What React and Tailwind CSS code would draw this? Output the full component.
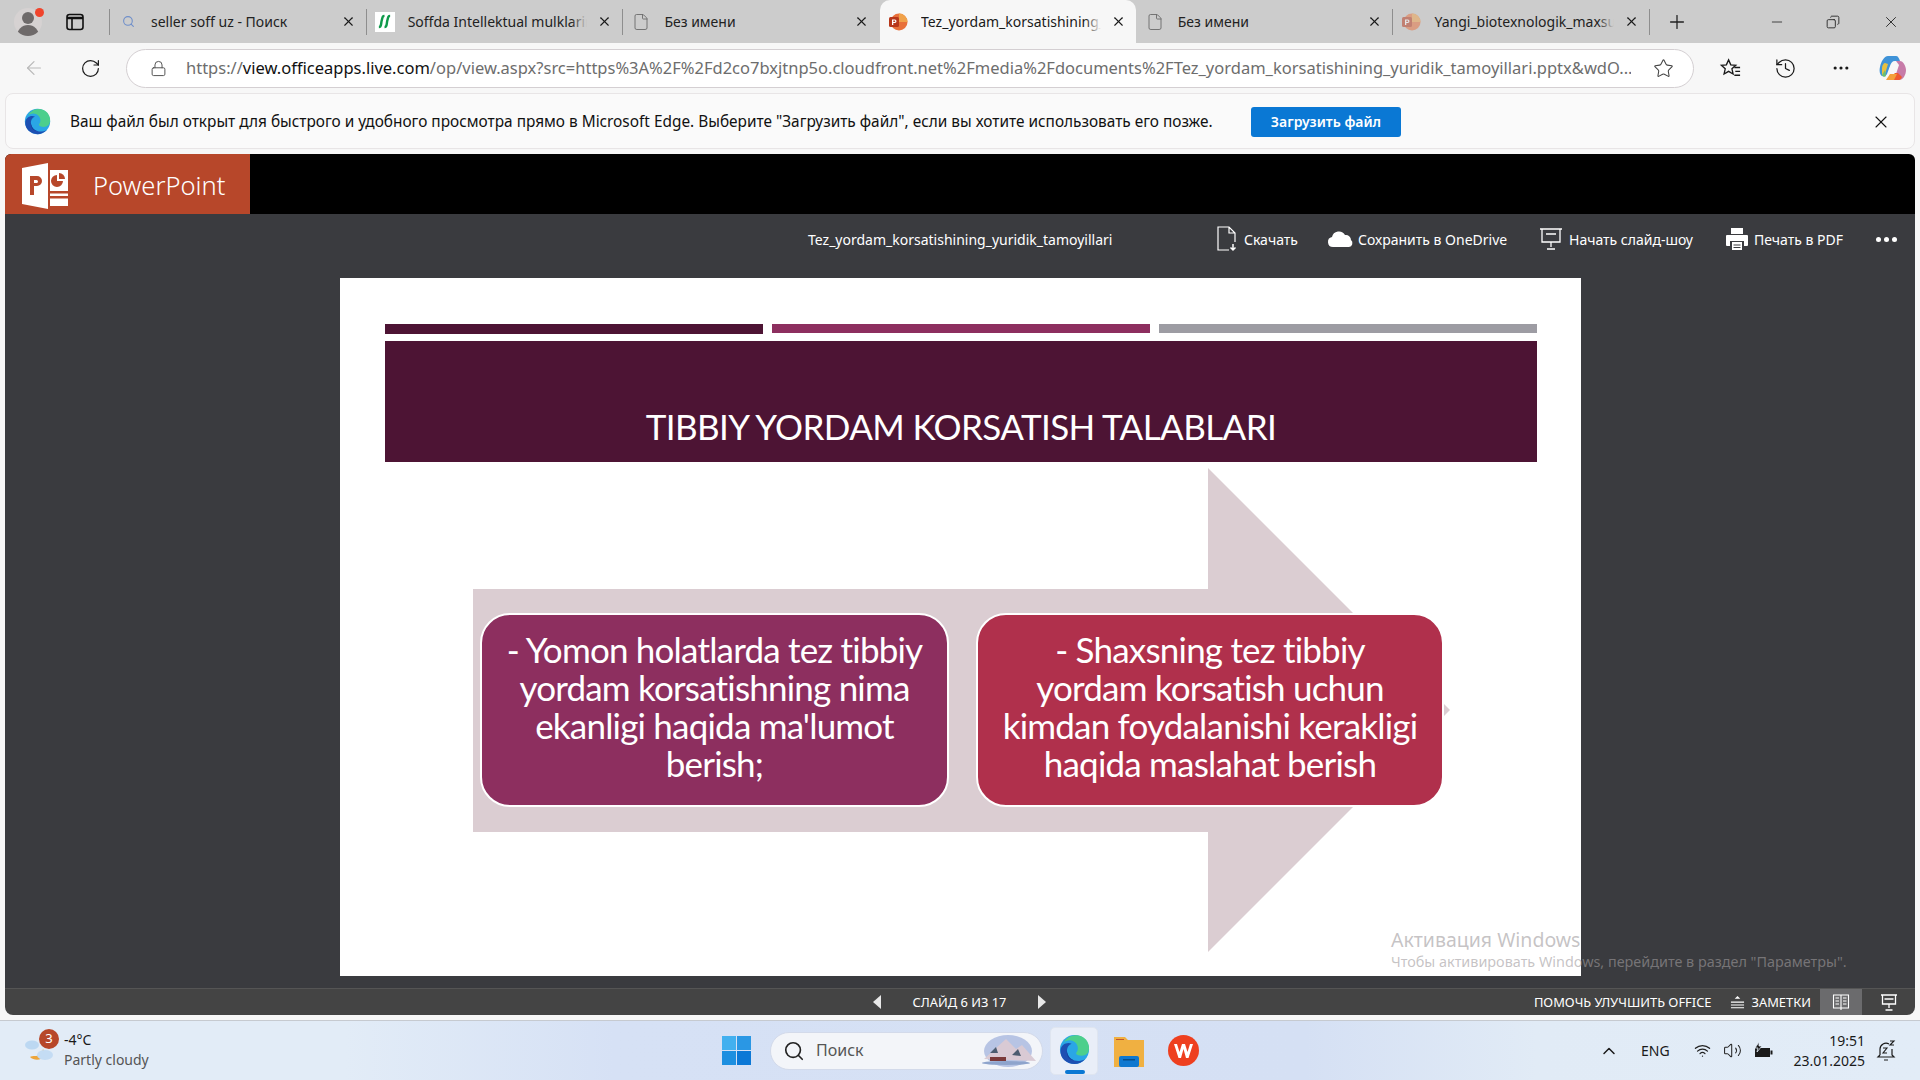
import { ArrowLeft, RotateCw, Lock, Star, History, MoreHorizontal, X, Plus, Minus, Copy, Search, File, ChevronUp, Wifi, Volume2 } from 'lucide-react';

const EdgeLogo = ({ className }) => (
  <svg viewBox="0 0 32 32" className={className}>
    <circle cx="16" cy="16" r="15" fill="#2aa6e6" />
    <path d="M9 4C14 0 23 0 28 6c3 4 4 9 2 13-2 3-6 4-10 3-2-1-3-2-2-3 2-2 2-6 0-9C15 6 9 5 5 9c1-2 2-4 4-5z" fill="#4ccf8c" />
    <path d="M1.5 17C2 11 8 8 13 10c-4 1-6 6-4 11 2 6 10 9 18 5-3 3-7 5-11 5C8 31 1 25 1.500 17z" fill="#1d4fb2" />
    <path d="M13 10c-4 1-6 6-4 11 1 3 3 5 6 6-4 0-7-4-7-9 0-4 2-7 5-8z" fill="#0f3f9a" />
  </svg>
);

const PptFavicon = ({ faded }) => (
  <svg viewBox="0 0 20 20" className={`w-[20px] h-[20px] ${faded ? 'opacity-50' : ''}`}>
    <circle cx="11" cy="10" r="8.500" fill="#e8703a" />
    <path d="M11 1.500a8.500 8.500 0 0 1 8.500 8.500H11z" fill="#f0a24a" />
    <rect x="1" y="5" width="10" height="10" rx="1.500" fill="#b7371a" />
    <path d="M4 7.500h2.800a1.700 1.700 0 0 1 0 3.400H5.300V13H4zM5.300 8.600v1.300h1.300a.65.65 0 0 0 0-1.300z" fill="#fff" />
  </svg>
);

const Tab = ({ icon, title, active, hideSep }) => (
  <>
    <div className={`w-px h-[26px] shrink-0 ${hideSep ? 'bg-transparent' : 'bg-[#8e8e8e]'}`} />
    <div className={`w-[255.700px] h-full shrink-0 flex items-center pl-[8px] pr-[10px] ${active ? 'bg-[#f7f7f7] rounded-t-[10px] text-[#1a1a1a]' : 'text-[#222]'}`}>
      <div className="w-[20px] h-[20px] flex items-center justify-center shrink-0">{icon}</div>
      <div className="relative flex-1 ml-[13px] pb-[1px] overflow-hidden whitespace-nowrap text-[14px]">
        {title}
        <div className={`absolute right-0 top-0 bottom-0 w-[16px] bg-gradient-to-r from-transparent ${active ? 'to-[#f7f7f7]' : 'to-[#cccccc]'}`} />
      </div>
      <X size={15} strokeWidth={1.8} className="ml-[10px] shrink-0 text-[#1a1a1a]" />
    </div>
  </>
);

const TabBar = () => (
  <div className="h-[43px] bg-[#cccccc] flex items-center shrink-0">
    <div className="w-[109px] h-full flex items-center shrink-0">
      <div className="relative ml-[14px] w-[28px] h-[28px] rounded-full bg-[#d6d2d2] overflow-hidden">
        <div className="mx-auto mt-[4px] w-[12px] h-[12px] rounded-full bg-[#6e6a6a]" />
        <div className="mx-auto mt-[1px] w-[22px] h-[14px] rounded-t-full bg-[#6e6a6a]" />
      </div>
      <div className="absolute left-[35px] top-[8px] w-[9px] h-[9px] rounded-full bg-[#f0442c]" />
      <svg viewBox="0 0 18 18" className="ml-[24px] w-[18px] h-[18px]" fill="none" stroke="#111" strokeWidth="1.600">
        <rect x="1" y="1.500" width="16" height="15" rx="2.500" />
        <path d="M1 5h16" strokeWidth="2.500" />
        <path d="M6 5v11" />
      </svg>
    </div>
    <Tab title="seller soff uz - Поиск" icon={<Search size={13} strokeWidth={2} className="text-[#6f8fca]" />} />
    <Tab
      title="Soffda Intellektual mulklarini"
      icon={
        <div className="w-[20px] h-[20px] bg-white flex items-center justify-center">
          <svg viewBox="0 0 16 16" className="w-[15px] h-[15px]" fill="none" stroke="#0f9a4a" strokeWidth="2.600">
            <path d="M2 14c3 0 2-3 3-7s1-5 3-5M8 14c3 0 2-3 3-7s1-5 3-5" />
          </svg>
        </div>
      }
    />
    <Tab title="Без имени" icon={<File size={18} strokeWidth={1.2} className="text-[#6a6a6a]" />} />
    <Tab active hideSep title="Tez_yordam_korsatishining_yuridik" icon={<PptFavicon />} />
    <Tab hideSep title="Без имени" icon={<File size={18} strokeWidth={1.2} className="text-[#6a6a6a]" />} />
    <Tab title="Yangi_biotexnologik_maxsus" icon={<PptFavicon faded />} />
    <div className="w-px h-[26px] shrink-0 bg-[#8e8e8e]" />
    <Plus size={22} strokeWidth={1.4} className="ml-[16px] text-[#222]" />
    <div className="flex-1" />
    <Minus size={16} strokeWidth={1.2} className="mr-[41px] text-[#222]" />
    <Copy size={14} strokeWidth={1.5} className="mr-[42px] text-[#222] -scale-x-100" />
    <X size={18} strokeWidth={1.2} className="mr-[20px] text-[#222]" />
  </div>
);

const CopilotLogo = () => (
  <svg viewBox="0 0 28 28" className="w-[28px] h-[28px] ml-[11px] shrink-0">
    <path d="M9 2h8c2 0 3 2 4 5l-5 0c-3 0-4 2-5 5l-3 8c-1 2-3 3-5 2-2-1-3-5-2-9 1-5 4-11 8-11z" fill="#3f93d8" />
    <path d="M3 14c0-3 2-5 3-5l3 1-3 10c-1 2-2 2-3 1z" fill="#e8c040" />
    <path d="M6 16l-3 5c1 2 3 2 4 1z" fill="#6cc070" />
    <path d="M17 7h4c3 0 6 5 6 9 0 5-3 10-7 10l-3-6 3-9z" fill="#c77ba8" />
    <path d="M12 26h8c1 0 2-1 3-3l-4-4h-3l-2 2z" fill="#ef5a30" />
    <path d="M7 26h8l3-6h-7z" fill="#f4a03a" />
    <path d="M11 13c1-2 2-3 4-3h3l-2 6c-1 2-2 4-4 4H9z" fill="#f7f7f7" />
  </svg>
);

const AddressBar = () => (
  <div className="h-[50px] flex items-center pl-[6px] shrink-0">
    <div className="w-[56px] flex justify-center"><ArrowLeft size={22} strokeWidth={1.3} className="text-[#b9b9b9]" /></div>
    <div className="w-[56px] flex justify-center"><RotateCw size={21} strokeWidth={1.4} className="text-[#1c1c1c]" /></div>
    <div className="ml-[8px] w-[1568px] h-[39px] rounded-full bg-white border border-[#d4cfd2] flex items-center pl-[23px] pr-[19px]">
      <Lock size={17} strokeWidth={1.4} className="text-[#555] shrink-0" />
      <div className="ml-[19px] flex-1 text-[16.500px] whitespace-nowrap overflow-hidden text-[#6d6d6d]">
        https://<span className="text-[#111]">view.officeapps.live.com</span>/op/view.aspx?src=https%3A%2F%2Fd2co7bxjtnp5o.cloudfront.net%2Fmedia%2Fdocuments%2FTez_yordam_korsatishining_yuridik_tamoyillari.pptx&wdO...
      </div>
      <Star size={21} strokeWidth={1.2} className="ml-[22px] text-[#444] shrink-0" />
    </div>
    <div className="ml-[8px] w-[56px] flex justify-center">
      <svg viewBox="0 0 24 24" className="w-[23px] h-[23px]" fill="none" stroke="#1a1a1a" strokeWidth="1.400">
        <path d="M10 3l2.300 5.200 5.200.4-4 3.700 1.200 5.400L10 15l-4.700 2.700 1.200-5.400-4-3.700 5.200-.4z" />
        <path d="M16 11h6M17 15h5M16 19h6" />
      </svg>
    </div>
    <div className="w-[55px] flex justify-center"><History size={23} strokeWidth={1.3} className="text-[#1a1a1a]" /></div>
    <div className="w-[55px] flex justify-center"><MoreHorizontal size={20} strokeWidth={1.8} className="text-[#1a1a1a]" /></div>
    <CopilotLogo />
  </div>
);

const InfoBar = () => (
  <div className="mx-[5px] h-[56px] pt-[1px] shrink-0 rounded-lg border border-[#e8e5e6] bg-[#fafafa] flex items-center text-[15.400px] text-[#111]">
    <EdgeLogo className="ml-[18px] w-[27px] h-[27px] shrink-0" />
    <div className="ml-[19px] w-[1181px] whitespace-nowrap shrink-0">
      Ваш файл был открыт для быстрого и удобного просмотра прямо в Microsoft Edge. Выберите "Загрузить файл", если вы хотите использовать его позже.
    </div>
    <div className="w-[150px] h-[30px] rounded-[3px] bg-[#0a78d4] text-white font-semibold text-[14px] flex items-center justify-center shrink-0">
      Загрузить файл
    </div>
    <div className="flex-1" />
    <X size={20} strokeWidth={1.3} className="mr-[23px] text-[#111]" />
  </div>
);

const PptLogo = () => (
  <svg viewBox="0 0 46 46" className="w-[46px] h-[46px] ml-[17px] shrink-0">
    <path d="M0 5L26 0v46L0 41z" fill="#fff" />
    <path d="M8 13h7a5 5 0 0 1 0 10h-3v9H8zM12 17v3h2.500a1.500 1.500 0 0 0 0-3z" fill="#b7472a" />
    <path d="M28 7h18v36H28z" fill="#fff" />
    <path d="M35 12a6 6 0 1 0 6 6h-6z" fill="#b7472a" />
    <path d="M37 10a6 6 0 0 1 6 6h-6z" fill="#b7472a" />
    <path d="M28 28h18v2.500H28zM28 33h18v2.500H28z" fill="#b7472a" />
  </svg>
);

const Toolbar = () => (
  <div className="w-full h-[50px] flex items-center text-white text-[14px] shrink-0">
    <div className="ml-[803px] w-[408px] whitespace-nowrap">Tez_yordam_korsatishining_yuridik_tamoyillari</div>
    <div className="w-[111px] flex items-center">
      <div className="w-[28px]">
        <svg viewBox="0 0 22 26" className="w-[22px] h-[26px]" fill="none" stroke="#fff" strokeWidth="1.200">
          <path d="M13 24H2V1h11l6 6v9M13 1v6h6" />
          <path d="M17 18v6m-2.500-2.500L17 24l2.500-2.500" strokeWidth="1.500" />
        </svg>
      </div>
      <span className="whitespace-nowrap">Скачать</span>
    </div>
    <div className="w-[212px] flex items-center">
      <div className="w-[31px]">
        <svg viewBox="0 0 26 18" className="w-[26px] h-[18px]" fill="#fff">
          <path d="M6 17a5 5 0 0 1-1-9.900 7 7 0 0 1 13-2 5 5 0 0 1 6 5 4 4 0 0 1-2 7z" />
        </svg>
      </div>
      <span className="whitespace-nowrap">Сохранить в OneDrive</span>
    </div>
    <div className="w-[186px] flex items-center">
      <div className="w-[30px]">
        <svg viewBox="0 0 24 24" className="w-[24px] h-[24px]" fill="none" stroke="#fff" strokeWidth="1.300">
          <path d="M1 2h22M3 2v13h18V2M12 15v5M8 22h8M7 7h10" />
        </svg>
      </div>
      <span className="whitespace-nowrap">Начать слайд-шоу</span>
    </div>
    <div className="w-[151px] flex items-center">
      <div className="w-[29px]">
        <svg viewBox="0 0 24 24" className="w-[24px] h-[24px]" fill="#fff">
          <path d="M6 1h12v6H6zM2 8h20a1 1 0 0 1 1 1v9a1 1 0 0 1-1 1h-3v-5H5v5H2a1 1 0 0 1-1-1V9a1 1 0 0 1 1-1z" />
          <path d="M7 15h10v8H7z" />
          <path d="M8.500 17.500h7v1h-7zM8.500 20h7v1h-7z" fill="#3a3b3f" />
        </svg>
      </div>
      <span className="whitespace-nowrap">Печать в PDF</span>
    </div>
    <div className="flex gap-[3px]">
      <div className="w-[5px] h-[5px] rounded-full bg-white" />
      <div className="w-[5px] h-[5px] rounded-full bg-white" />
      <div className="w-[5px] h-[5px] rounded-full bg-white" />
    </div>
  </div>
);

const Slide = () => (
  <div className="w-[1241px] h-[698px] bg-white shrink-0 pt-[46px] pl-[45px] pr-[44px] font-['Lato',sans-serif] text-white">
    <div className="flex gap-[9px] h-[10px]">
      <div className="w-[378px] h-[10px] bg-[#4d1434]" />
      <div className="w-[378px] h-[9px] bg-[#8d2f5f]" />
      <div className="w-[378px] h-[9px] bg-[#9d9ca3]" />
    </div>
    <div className="mt-[7px] h-[121px] bg-[#4d1434] flex items-end justify-center pb-[12px]">
      <div className="text-[35px] leading-[48px] tracking-[-0.600px] whitespace-nowrap">TIBBIY YORDAM KORSATISH TALABLARI</div>
    </div>
    {/* Diagram: arrow sits behind the two boxes */}
    <div className="relative h-[345px] mt-[151px] ml-[95px]">
      <svg viewBox="0 0 977 485" className="absolute left-[-7px] top-[-145px] w-[977px] h-[485px]">
        <path d="M0 121H735V0L977 242 735 484V364H0z" fill="#dbcdd2" />
      </svg>
      <div className="relative flex gap-[27px] items-start">
        <div className="w-[469px] h-[194px] pb-[9px] rounded-[30px] border-2 border-white bg-[#8d2f5f] flex items-center justify-center text-center text-[35px] leading-[38px] tracking-[-0.800px]">
          <div>- Yomon holatlarda tez tibbiy<br />yordam korsatishning nima<br />ekanligi haqida ma'lumot<br />berish;</div>
        </div>
        <div className="w-[468px] h-[194px] pb-[9px] rounded-[30px] border-2 border-white bg-[#b0304c] flex items-center justify-center text-center text-[35px] leading-[38px] tracking-[-0.800px]">
          <div>- Shaxsning tez tibbiy<br />yordam korsatish uchun<br />kimdan foydalanishi kerakligi<br />haqida maslahat berish</div>
        </div>
      </div>
    </div>
  </div>
);

const StatusBar = () => (
  <div className="h-[27px] shrink-0 bg-[#444444] border-t border-[#555] flex items-center text-white text-[12.900px]">
    <div className="w-[862px]" />
    <div className="w-[20px] flex justify-center">
      <div className="w-0 h-0 border-y-[7px] border-y-transparent border-r-[8px] border-r-[#e8e8e8]" />
    </div>
    <div className="w-[145px] mt-[2px] text-center whitespace-nowrap">СЛАЙД 6 ИЗ 17</div>
    <div className="w-[20px] flex justify-center">
      <div className="w-0 h-0 border-y-[7px] border-y-transparent border-l-[8px] border-l-[#e8e8e8]" />
    </div>
    <div className="flex-1" />
    <div className="mt-[2px] whitespace-nowrap">ПОМОЧЬ УЛУЧШИТЬ OFFICE</div>
    <svg viewBox="0 0 16 16" className="ml-[18px] w-[15px] h-[15px]" fill="#fff">
      <path d="M8 1l3 3H5zM1 7h14v1.200H1zM1 10h14v1.200H1zM1 13h14v1.200H1z" />
    </svg>
    <div className="ml-[7px] mt-[2px] whitespace-nowrap">ЗАМЕТКИ</div>
    <div className="ml-[9px] w-[42px] h-full bg-[#6b6b6d] flex items-center justify-center">
      <svg viewBox="0 0 18 18" className="w-[18px] h-[18px]" fill="none" stroke="#fff" strokeWidth="1.100">
        <path d="M1.500 2h15v13h-15zM9 2v15M3.500 5h3.500M3.500 8h3.500M3.500 11h3.500M11 5h3.500M11 8h3.500M11 11h3.500" />
      </svg>
    </div>
    <div className="w-[53px] flex justify-center">
      <svg viewBox="0 0 18 18" className="w-[18px] h-[18px]" fill="none" stroke="#fff" strokeWidth="1.300">
        <path d="M1 2h16M2.500 2v9h13V2M4.500 6h9M9 11v4M5.500 17h7" />
      </svg>
    </div>
  </div>
);

const PptViewer = () => (
  <div className="relative mx-[5px] mt-[5px] flex-1 min-h-0 flex flex-col rounded-t-md rounded-b-lg overflow-hidden">
    <div className="h-[60px] bg-black shrink-0">
      <div className="w-[245px] h-full bg-[#b7472a] flex items-center pt-[3px] text-white">
        <PptLogo />
        <div className="ml-[25px] text-[25.500px] font-light whitespace-nowrap">PowerPoint</div>
      </div>
    </div>
    <div className="flex-1 min-h-0 bg-[#3a3b3f] flex flex-col">
      <Toolbar />
      <div className="mt-[14px] ml-[335px]"><Slide /></div>
    </div>
    <StatusBar />
  </div>
);

const Watermark = () => (
  <div className="absolute left-[1391px] top-[926px] text-[rgba(160,155,158,0.6)] pointer-events-none whitespace-nowrap">
    <div className="text-[19.500px] leading-[27px]">Активация Windows</div>
    <div className="-mt-[1px] text-[14.400px] leading-[20px]">Чтобы активировать Windows, перейдите в раздел "Параметры".</div>
  </div>
);

const Taskbar = () => (
  <div className="h-[60px] mt-[5px] shrink-0 border-t border-[#c6cad0] bg-[linear-gradient(90deg,#e2ecf7_0%,#e2ecf7_18%,#d6e1f5_32%,#d5e0f4_68%,#e1ebf6_80%,#e2ecf7_100%)] flex items-center text-[#1a1a1a]">
    <div className="relative w-[64px] h-full shrink-0">
      <svg viewBox="0 0 32 32" className="absolute left-[24px] top-[12px] w-[32px] h-[32px]">
        <ellipse cx="8" cy="12" rx="7" ry="4.500" fill="#bcd8f2" />
        <path d="M6 24c4 4 12 4 14-2 1-2 0-4-1-6-1 5-4 7-8 7-2 0-4 0-5 1z" fill="#eda53a" />
        <ellipse cx="21" cy="22" rx="8" ry="5" fill="#c4dcf4" />
      </svg>
      <div className="absolute left-[39px] top-[8px] w-[20px] h-[20px] rounded-full bg-[#b7472a] text-white text-[13px] flex items-center justify-center">3</div>
    </div>
    <div className="w-[170px] shrink-0 text-[14px] leading-[20px] -mt-[1px]">
      <div>-4°C</div>
      <div className="text-[#555]">Partly cloudy</div>
    </div>
    <div className="w-[488px] shrink-0" />
    <div className="grid grid-cols-2 gap-[1px] w-[29px] h-[29px] shrink-0">
      <div className="bg-[#42b0ef]" />
      <div className="bg-[#2a97e4]" />
      <div className="bg-[#1d8fe0]" />
      <div className="bg-[#0c78d6]" />
    </div>
    <div className="ml-[19px] w-[273px] h-[38px] shrink-0 rounded-full bg-[#f3f5f9] border border-[#d3daea] flex items-center pl-[12px] pr-[6px]">
      <Search size={22} strokeWidth={1.800} className="text-[#222]" />
      <span className="ml-[11px] pb-[1px] text-[16px] text-[#555] flex-1">Поиск</span>
      <svg viewBox="0 0 60 36" className="w-[60px] h-[36px]">
        <ellipse cx="32" cy="18" rx="24" ry="16" fill="#b7c4e4" />
        <path d="M8 26L30 6l10 10 6-4 14 16z" fill="#d9cad4" />
        <path d="M14 20l6-6 2 6zM36 22l6-6 3 7z" fill="#4c5c70" />
        <rect x="14" y="24" width="16" height="4" fill="#7b3a3a" />
        <ellipse cx="30" cy="30" rx="24" ry="2" fill="#8ea4cc" />
      </svg>
    </div>
    <div className="ml-[7px] relative w-[48px] h-[48px] shrink-0 rounded-[5px] bg-[#e9eef8] border border-[#dfe5f0] flex items-center justify-center">
      <EdgeLogo className="w-[31px] h-[31px] -mt-[2px]" />
      <div className="absolute left-[14px] bottom-0 w-[20px] h-[4px] rounded-full bg-[#0a78d4]" />
    </div>
    <svg viewBox="0 0 30 32" className="ml-[16px] w-[30px] h-[32px] shrink-0">
      <path d="M0 2h11l3 3h16v27H0z" fill="#f0b041" />
      <path d="M2 4h8v1H2z" fill="#c0562a" />
      <rect x="5" y="21" width="20" height="11" rx="2" fill="#0f78d0" />
      <rect x="9" y="24" width="12" height="1.500" fill="#074d8a" />
    </svg>
    <svg viewBox="0 0 31 31" className="ml-[24px] w-[31px] h-[31px] shrink-0">
      <circle cx="15.500" cy="15.500" r="15.500" fill="#ee3f1f" />
      <path d="M6 9l4.500 14h2.500l2.500-9 2.500 9h2.500L25 9h-3l-2.500 8L17 9h-3l-2.500 8L9 9z" fill="#fff" />
    </svg>
    <div className="flex-1" />
    <ChevronUp size={20} strokeWidth={1.800} className="text-[#1a1a1a]" />
    <div className="ml-[22px] w-[28px] text-[14px] whitespace-nowrap">ENG</div>
    <Wifi size={17} strokeWidth={1.800} className="ml-[25px] text-[#222]" />
    <Volume2 size={19} strokeWidth={1.300} className="ml-[12px] text-[#222]" />
    <svg viewBox="0 0 20 18" className="ml-[11px] w-[20px] h-[18px]">
      <path d="M2 6h15v9H2z" fill="#1a1a1a" />
      <path d="M17.500 8.500h2v4h-2z" fill="#1a1a1a" />
      <path d="M6 0L2 6h3l-1 4 5-6H6z" fill="#1a1a1a" stroke="#e2ecf7" strokeWidth="0.800" />
    </svg>
    <div className="ml-[4px] w-[88px] text-right text-[14px] leading-[20px] whitespace-nowrap">
      <div>19:51</div>
      <div>23.01.2025</div>
    </div>
    <svg viewBox="0 0 20 22" className="ml-[11px] mr-[24px] w-[20px] h-[22px]" fill="none" stroke="#1a1a1a" strokeWidth="1.200">
      <path d="M4 15V9a6 6 0 0 1 9-5M16 9v6l2 2H2l2-2M8 20h4" />
      <path d="M7 8h4l-4 5h4M14 1h4l-4 4h4" strokeWidth="1.100" />
    </svg>
  </div>
);

export default function App() {
  return (
    <div className="relative w-[1920px] h-[1080px] overflow-hidden bg-[#f7f7f7] flex flex-col font-['Noto_Sans',sans-serif]">
      <TabBar />
      <AddressBar />
      <InfoBar />
      <PptViewer />
      <Taskbar />
      <Watermark />
    </div>
  );
}
